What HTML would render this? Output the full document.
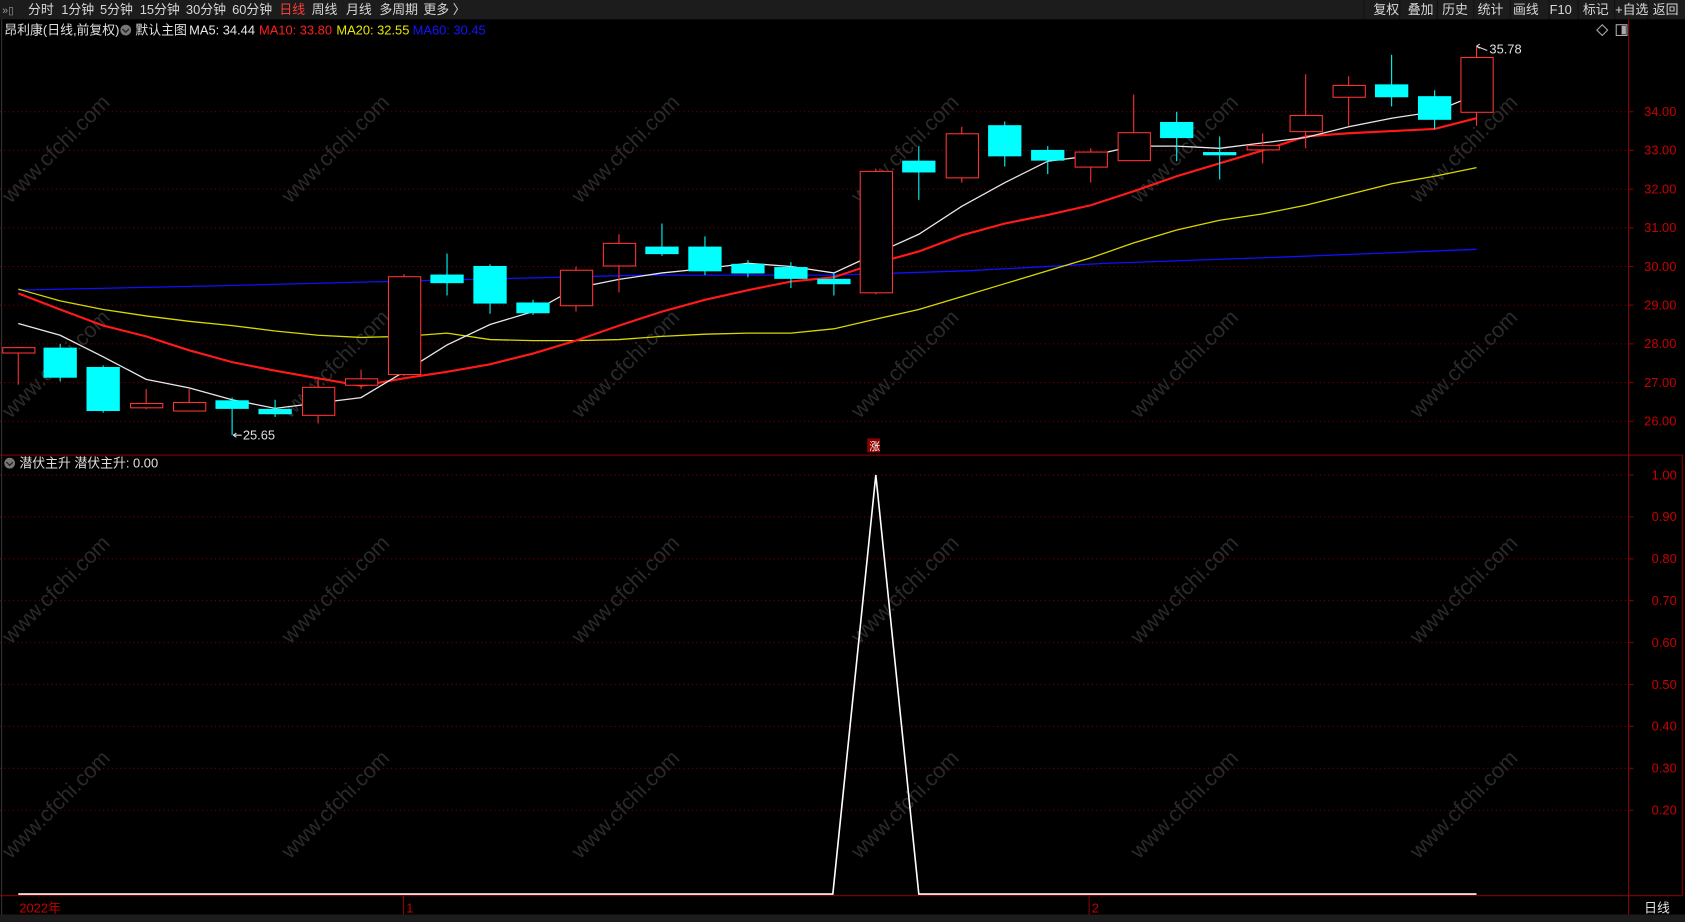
<!DOCTYPE html>
<html><head><meta charset="utf-8"><style>
html,body{margin:0;padding:0;background:#000;overflow:hidden}
svg{display:block}
text{font-family:"Liberation Sans","Noto Sans CJK SC",sans-serif}
</style></head><body>
<svg width="1685" height="922" viewBox="0 0 1568 858" preserveAspectRatio="none" xmlns="http://www.w3.org/2000/svg">
<rect width="1568" height="858" fill="#000"/>
<!-- top toolbar -->
<rect x="0" y="0" width="1568" height="18" fill="#1c1c1c"/>
<g font-size="12" fill="#d8d8d8">
<text x="2" y="13" font-size="10" fill="#999">»▯</text>
<text x="26" y="13">分时</text><text x="57" y="13">1分钟</text><text x="93" y="13">5分钟</text>
<text x="130" y="13">15分钟</text><text x="173" y="13">30分钟</text><text x="216" y="13">60分钟</text>
<text x="260" y="13" fill="#ff3c3c">日线</text><text x="290" y="13">周线</text><text x="322" y="13">月线</text>
<text x="353" y="13">多周期</text><text x="394" y="13">更多 〉</text>
</g>
<g fill="#111"><rect x="1269" y="0" width="1" height="18"/><rect x="1302" y="0" width="1" height="18"/><rect x="1337" y="0" width="1" height="18"/><rect x="1371" y="0" width="1" height="18"/><rect x="1405" y="0" width="1" height="18"/><rect x="1441" y="0" width="1" height="18"/><rect x="1468" y="0" width="1" height="18"/><rect x="1502" y="0" width="1" height="18"/><rect x="1533" y="0" width="1" height="18"/></g>
<g font-size="12" fill="#d8d8d8">
<text x="1278" y="13">复权</text><text x="1310" y="13">叠加</text><text x="1342" y="13">历史</text><text x="1375" y="13">统计</text>
<text x="1408" y="13">画线</text><text x="1442" y="13">F10</text><text x="1473" y="13">标记</text><text x="1503" y="13">+自选</text><text x="1538" y="13">返回</text>
</g>
<!-- title row -->
<g font-size="12">
<text x="4" y="32" fill="#e0e0e0">昂利康(日线,前复权)</text>
<circle cx="117" cy="28" r="5" fill="#777"/><path d="M114 27l3 3 3-3" stroke="#222" fill="none" stroke-width="1.2"/>
<text x="126" y="32" fill="#e0e0e0">默认主图</text>
<text x="176" y="32" fill="#e8e8e8">MA5: 34.44</text>
<text x="241" y="32" fill="#ff1e1e">MA10: 33.80</text>
<text x="313" y="32" fill="#e8e800">MA20: 32.55</text>
<text x="384" y="32" fill="#1414ff">MA60: 30.45</text>
</g>
<path d="M1486 28l5-5 5 5-5 5z" stroke="#aaa" fill="none"/>
<rect x="1504" y="23" width="10" height="10" fill="none" stroke="#aaa"/><rect x="1509" y="24" width="4" height="8" fill="#aaa"/>
<!-- borders -->
<rect x="1" y="18" width="1" height="833" fill="#333"/>
<rect x="1515" y="18" width="1" height="833" fill="#8b0000"/>
<rect x="1565" y="423" width="1" height="410" fill="#8b0000"/>
<rect x="0" y="423" width="1566" height="1" fill="#8b0000"/>
<rect x="0" y="833" width="1566" height="1" fill="#8b0000"/>
<rect x="0" y="851" width="1568" height="7" fill="#1c1c1c"/>
<!-- grid -->
<g stroke="#7a0000" stroke-dasharray="1,3" stroke-width="1">
<path d="M0 104H1515M0 140H1515M0 176H1515M0 212H1515M0 248H1515M0 284H1515M0 320H1515M0 356H1515M0 392H1515"/>
<path d="M0 442H1515M0 481H1515M0 520H1515M0 559H1515M0 598H1515M0 637H1515M0 676H1515M0 715H1515M0 754H1515"/>
</g>
<g stroke="#8b0000"><path d="M1515 104h5M1515 140h5M1515 176h5M1515 212h5M1515 248h5M1515 284h5M1515 320h5M1515 356h5M1515 392h5M1515 442h5M1515 481h5M1515 520h5M1515 559h5M1515 598h5M1515 637h5M1515 676h5M1515 715h5M1515 754h5"/></g>
<g font-size="12" fill="#c80000">
<text x="1530" y="108">34.00</text><text x="1530" y="144">33.00</text><text x="1530" y="180">32.00</text><text x="1530" y="216">31.00</text><text x="1530" y="252">30.00</text><text x="1530" y="288">29.00</text><text x="1530" y="324">28.00</text><text x="1530" y="360">27.00</text><text x="1530" y="396">26.00</text>
<text x="1537" y="446">1.00</text><text x="1537" y="485">0.90</text><text x="1537" y="524">0.80</text><text x="1537" y="563">0.70</text><text x="1537" y="602">0.60</text><text x="1537" y="641">0.50</text><text x="1537" y="680">0.40</text><text x="1537" y="719">0.30</text><text x="1537" y="758">0.20</text>
</g>
<!-- watermarks -->
<g font-size="20" fill="#2a2a2a" font-family="Liberation Sans">
<text transform="translate(10,190) rotate(-45)">www.cfchi.com</text>
<text transform="translate(270,190) rotate(-45)">www.cfchi.com</text>
<text transform="translate(540,190) rotate(-45)">www.cfchi.com</text>
<text transform="translate(800,190) rotate(-45)">www.cfchi.com</text>
<text transform="translate(1060,190) rotate(-45)">www.cfchi.com</text>
<text transform="translate(1320,190) rotate(-45)">www.cfchi.com</text>
<text transform="translate(10,390) rotate(-45)">www.cfchi.com</text>
<text transform="translate(270,390) rotate(-45)">www.cfchi.com</text>
<text transform="translate(540,390) rotate(-45)">www.cfchi.com</text>
<text transform="translate(800,390) rotate(-45)">www.cfchi.com</text>
<text transform="translate(1060,390) rotate(-45)">www.cfchi.com</text>
<text transform="translate(1320,390) rotate(-45)">www.cfchi.com</text>
<text transform="translate(10,600) rotate(-45)">www.cfchi.com</text>
<text transform="translate(270,600) rotate(-45)">www.cfchi.com</text>
<text transform="translate(540,600) rotate(-45)">www.cfchi.com</text>
<text transform="translate(800,600) rotate(-45)">www.cfchi.com</text>
<text transform="translate(1060,600) rotate(-45)">www.cfchi.com</text>
<text transform="translate(1320,600) rotate(-45)">www.cfchi.com</text>
<text transform="translate(10,800) rotate(-45)">www.cfchi.com</text>
<text transform="translate(270,800) rotate(-45)">www.cfchi.com</text>
<text transform="translate(540,800) rotate(-45)">www.cfchi.com</text>
<text transform="translate(800,800) rotate(-45)">www.cfchi.com</text>
<text transform="translate(1060,800) rotate(-45)">www.cfchi.com</text>
<text transform="translate(1320,800) rotate(-45)">www.cfchi.com</text>
</g>
<!-- MA lines -->
<polyline fill="none" stroke="#1010ff" stroke-width="1.2" points="17,270 200,266 400,261 600,256 776,256 900,252 1030,245 1200,239 1374,232"/>
<polyline fill="none" stroke="#d8d800" stroke-width="1.2" points="17,269 56,280 96,288 136,294 176,299 216,303 256,308 296,312 336,314 376,313 416,310 456,316 496,317 536,317 576,316 616,313 656,311 696,310 736,310 776,306 815,297 855,288 895,276 935,264 975,252 1015,240 1055,226 1095,214 1135,205 1175,199 1215,191 1255,181 1295,171 1335,164 1374,156"/>
<polyline fill="none" stroke="#ff1a1a" stroke-width="2" points="17,273 56,288 96,303 136,313 176,326 216,337 256,345 296,352 336,359 376,352 416,346 456,339 496,329 536,317 576,303 616,290 656,279 696,270 736,262 776,258 815,245 855,234 895,219 935,208 975,200 1015,191 1055,178 1095,164 1135,152 1175,140 1215,127 1255,124 1295,122 1335,120 1374,110"/>
<polyline fill="none" stroke="#e8e8e8" stroke-width="1.2" points="17,301 56,312 96,332 136,353 176,361 216,372 256,380 296,375 336,370 376,346 416,321 456,302 496,290 536,268 576,260 616,254 656,250 696,245 736,248 776,254 815,236 855,218 895,192 935,170 975,150 1015,145 1055,136 1095,136 1135,138 1175,133 1215,128 1255,118 1295,110 1335,104 1374,88"/>
<!-- candles: red hollow -->
<g stroke="#ff3232" fill="none" stroke-width="1">
<path d="M17 323V358"/><rect x="2.5" y="323.5" width="30" height="5" fill="#000"/>
<path d="M136 362V381"/><rect x="121.5" y="375.5" width="30" height="4" fill="#000"/>
<path d="M176 362V382"/><rect x="161.5" y="374.5" width="30" height="8" fill="#000"/>
<path d="M296 352V394"/><rect x="281.5" y="360.5" width="30" height="26" fill="#000"/>
<path d="M336 344V362"/><rect x="321.5" y="352.5" width="30" height="6" fill="#000"/>
<path d="M376 255V350"/><rect x="361.5" y="257.5" width="30" height="91" fill="#000"/>
<path d="M536 248V290"/><rect x="521.5" y="251.5" width="30" height="33" fill="#000"/>
<path d="M576 218V272"/><rect x="561.5" y="226.5" width="30" height="21" fill="#000"/>
<path d="M815 157V274"/><rect x="800.5" y="159.5" width="30" height="113" fill="#000"/>
<path d="M895 118V170"/><rect x="880.5" y="124.5" width="30" height="41" fill="#000"/>
<path d="M1015 138V170"/><rect x="1000.5" y="141.5" width="30" height="14" fill="#000"/>
<path d="M1055 88V150"/><rect x="1040.5" y="123.5" width="30" height="26" fill="#000"/>
<path d="M1175 124V152"/><rect x="1160.5" y="135.5" width="30" height="4" fill="#000"/>
<path d="M1215 69V138"/><rect x="1200.5" y="107.5" width="30" height="15" fill="#000"/>
<path d="M1255 71V117"/><rect x="1240.5" y="79.5" width="30" height="11" fill="#000"/>
<path d="M1374 43V117"/><rect x="1359.5" y="53.5" width="30" height="51" fill="#000"/>
</g>
<!-- cyan -->
<g stroke="#00ffff" fill="#00ffff">
<path d="M56 320V355"/><rect x="41" y="324" width="30" height="27"/>
<path d="M96 340V384"/><rect x="81" y="342" width="30" height="40"/>
<path d="M216 370V405"/><rect x="201" y="373" width="30" height="7"/>
<path d="M256 372V388"/><rect x="241" y="381" width="30" height="4"/>
<path d="M416 236V275"/><rect x="401" y="256" width="30" height="7"/>
<path d="M456 246V292"/><rect x="441" y="248" width="30" height="34"/>
<path d="M496 279V293"/><rect x="481" y="282" width="30" height="9"/>
<path d="M616 208V238"/><rect x="601" y="230" width="30" height="6"/>
<path d="M656 220V256"/><rect x="641" y="230" width="30" height="22"/>
<path d="M696 242V258"/><rect x="681" y="246" width="30" height="8"/>
<path d="M736 244V268"/><rect x="721" y="249" width="30" height="10"/>
<path d="M776 253V275"/><rect x="761" y="260" width="30" height="4"/>
<path d="M855 136V186"/><rect x="840" y="150" width="30" height="10"/>
<path d="M935 113V155"/><rect x="920" y="117" width="30" height="28"/>
<path d="M975 136V162"/><rect x="960" y="140" width="30" height="9"/>
<path d="M1095 104V150"/><rect x="1080" y="114" width="30" height="14"/>
<path d="M1135 127V167"/><rect x="1120" y="142" width="30" height="2"/>
<path d="M1295 51V99"/><rect x="1280" y="79" width="30" height="11"/>
<path d="M1335 84V120"/><rect x="1320" y="90" width="30" height="21"/>
</g>
<!-- labels -->
<g font-size="12" fill="#e0e0e0">
<text x="1386" y="50">35.78</text>
<path d="M1374 43l10 4M1374 43l3-2M1374 43l3 2" stroke="#ddd" fill="none"/>
<text x="226" y="409">25.65</text>
<path d="M217 405h8M217 405l3-2M217 405l3 2" stroke="#ddd" fill="none"/>
</g>
<rect x="807" y="408" width="12" height="13" fill="#8b0000"/>
<text x="809" y="419" font-size="10" fill="#fff">涨</text>
<!-- indicator -->
<circle cx="9" cy="431" r="5" fill="#777"/><path d="M6 430l3 3 3-3" stroke="#222" fill="none" stroke-width="1.2"/>
<text x="18" y="435" font-size="12" fill="#e0e0e0">潜伏主升  潜伏主升: 0.00</text>
<polyline fill="none" stroke="#fff" stroke-width="1.5" points="17,832 775,832 815,442 855,832 1374,832"/>
<!-- bottom axis -->
<text x="18" y="849" font-size="12" fill="#c80000">2022年</text>
<rect x="375" y="834" width="1" height="17" fill="#8b0000"/><text x="378" y="849" font-size="12" fill="#c80000">1</text>
<rect x="1013" y="834" width="1" height="17" fill="#8b0000"/><text x="1016" y="849" font-size="12" fill="#c80000">2</text>
<text x="1530" y="849" font-size="12" fill="#e0e0e0">日线</text>
</svg>
</body></html>
